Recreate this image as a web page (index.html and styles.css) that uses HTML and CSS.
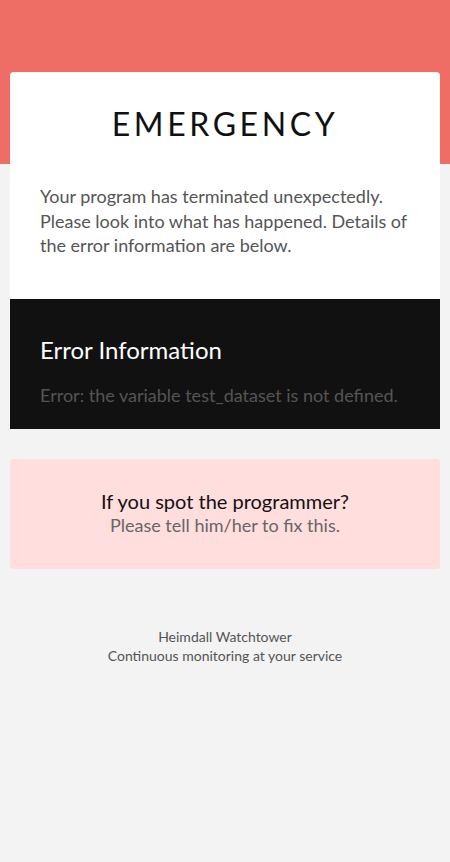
FILE: index.html
```html
<!DOCTYPE html>
<html lang="en">
<head>
<meta charset="utf-8">
<title>Emergency</title>
<link rel="stylesheet" href="styles.css">
</head>
<body>
<div class="band"></div>
<main class="page">
  <section class="card">
    <div class="card-top">
      <h1 class="title">EMERGENCY</h1>
      <p class="lead">Your program has terminated unexpectedly. Please look into what has happened. Details of the error information are below.</p>
    </div>
    <div class="card-error">
      <h2 class="error-title">Error Information</h2>
      <p class="error-text">Error: the variable test_dataset is not defined.</p>
    </div>
  </section>
  <section class="notice">
    <p class="notice-head">If you spot the programmer?</p>
    <p class="notice-sub">Please tell him/her to fix this.</p>
  </section>
  <footer class="footer">
    <p>Heimdall Watchtower</p>
    <p>Continuous monitoring at your service</p>
  </footer>
</main>
</body>
</html>
```
FILE: styles.css
```css
* { box-sizing: border-box; }
html, body { margin: 0; padding: 0; }
body {
  background: #f3f3f3;
  font-family: Lato, "Open Sans", sans-serif;
  position: relative;
  min-height: 862px;
}
.band {
  position: absolute;
  top: 0; left: 0; right: 0;
  height: 164px;
  background: #ee6e66;
}
.page {
  position: relative;
  padding: 72px 10px 0;
}
.card {
  background: #fff;
  border-radius: 4px 4px 0 0;
  overflow: hidden;
}
.card-top {
  padding: 30px 30px 41px;
}
.title {
  margin: 0;
  text-align: center;
  font-size: 32px;
  font-weight: 400;
  letter-spacing: 3.6px;
  color: #111;
  line-height: 44px;
}
.lead {
  margin: 38px 0 0;
  font-size: 18px;
  line-height: 24.5px;
  color: #555;
}
.card-error {
  background: #111;
  padding: 36px 30px 22px;
}
.error-title {
  margin: 0;
  font-size: 24px;
  font-weight: 400;
  color: #fff;
  line-height: 30px;
}
.error-text {
  margin: 18px 0 0;
  font-size: 18px;
  line-height: 24px;
  color: #555;
}
.notice {
  margin-top: 30px;
  background: #ffdedd;
  border-radius: 4px;
  padding: 29px 20px 33px;
  text-align: center;
}
.notice-head {
  margin: 0;
  font-size: 20px;
  line-height: 26px;
  color: #111;
}
.notice-sub {
  margin: 0;
  font-size: 18px;
  line-height: 22px;
  color: #666;
}
.footer {
  margin-top: 58px;
  text-align: center;
  font-size: 14px;
  line-height: 19px;
  color: #555;
}
.footer p { margin: 0; }
```
